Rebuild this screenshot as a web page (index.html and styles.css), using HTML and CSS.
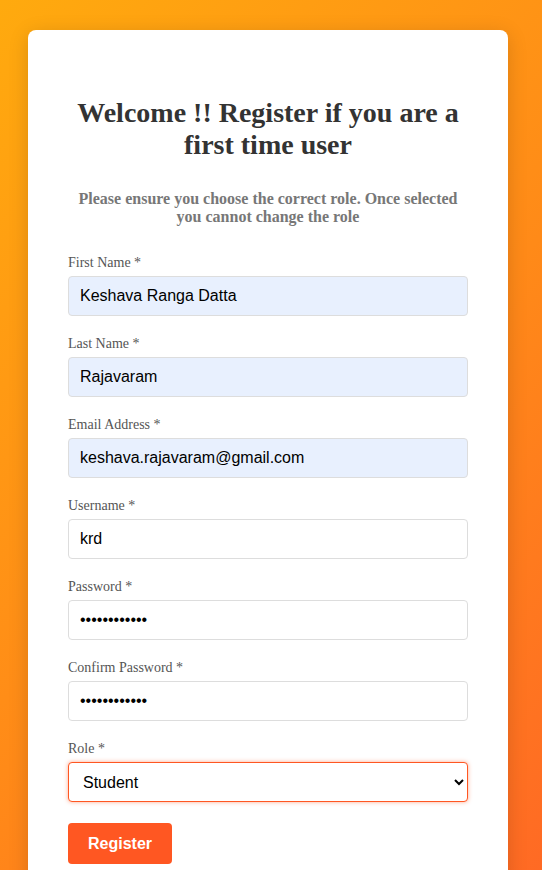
FILE: index.html
```html
<!DOCTYPE html>
<html lang="en">
<head>
<meta charset="utf-8">
<title>Register</title>
<link rel="stylesheet" href="styles.css">
</head>
<body>
<main class="page">
  <section class="card">
    <h2 class="title">Welcome !! Register if you are a first time user</h2>
    <h4 class="subtitle">Please ensure you choose the correct role. Once selected you cannot change the role</h4>
    <form class="form">
      <div class="field">
        <label class="label">First Name *</label>
        <input class="input autofill" type="text" value="Keshava Ranga Datta">
      </div>
      <div class="field">
        <label class="label">Last Name *</label>
        <input class="input autofill" type="text" value="Rajavaram">
      </div>
      <div class="field">
        <label class="label">Email Address *</label>
        <input class="input autofill" type="email" value="keshava.rajavaram@gmail.com">
      </div>
      <div class="field">
        <label class="label">Username *</label>
        <input class="input" type="text" value="krd">
      </div>
      <div class="field">
        <label class="label">Password *</label>
        <input class="input" type="password" value="password1234">
      </div>
      <div class="field">
        <label class="label">Confirm Password *</label>
        <input class="input" type="password" value="password1234">
      </div>
      <div class="field">
        <label class="label">Role *</label>
        <select class="input select focused">
          <option>Student</option>
          <option>Teacher</option>
        </select>
      </div>
      <button class="btn" type="button">Register</button>
    </form>
  </section>
</main>
</body>
</html>
```
FILE: styles.css
```css
html, body {
  margin: 0;
  padding: 0;
  height: 100%;
}
body {
  background: linear-gradient(135deg, #ffaa0e 0%, #ff8a18 55%, #ff6a24 100%);
  background-attachment: fixed;
  font-family: "Liberation Serif", "Times New Roman", serif;
  overflow: hidden;
}
.page {
  padding: 30px 34px 0 28px;
}
.card {
  width: 480px;
  box-sizing: border-box;
  background: #fff;
  border-radius: 8px;
  box-shadow: 0 4px 20px rgba(0, 0, 0, 0.15);
  padding: 40px 40px 40px 40px;
  min-height: 900px;
}
.title {
  margin: 27px 0 0 0;
  text-align: center;
  font-size: 28px;
  line-height: 32px;
  font-weight: bold;
  color: #333;
}
.subtitle {
  margin: 29px 0 0 0;
  text-align: center;
  font-size: 16px;
  line-height: 18px;
  font-weight: bold;
  color: #777;
}
.form {
  margin-top: 29px;
  display: flex;
  flex-direction: column;
}
.field {
  display: flex;
  flex-direction: column;
  margin-bottom: 20px;
}
.label {
  font-size: 14px;
  line-height: 16px;
  color: #555;
  margin-bottom: 5px;
}
.input {
  box-sizing: border-box;
  width: 100%;
  height: 40px;
  padding: 0 11px;
  border: 1px solid #ddd;
  border-radius: 4px;
  background: #fff;
  font-family: "Liberation Sans", Arial, sans-serif;
  font-size: 16px;
  color: #000;
  outline: none;
}
.autofill {
  background: #e8f0fe;
}
.select {
  padding: 0 8px 0 10px;
  appearance: auto;
}
.focused {
  border-color: #ff5722;
  box-shadow: 0 0 4px rgba(255, 87, 34, 0.5);
}
.btn {
  align-self: flex-start;
  margin-top: 1px;
  width: 104px;
  height: 41px;
  border: none;
  border-radius: 4px;
  background: #ff5722;
  color: #fff;
  font-family: "Liberation Sans", Arial, sans-serif;
  font-size: 16px;
  font-weight: bold;
  cursor: pointer;
}
```
